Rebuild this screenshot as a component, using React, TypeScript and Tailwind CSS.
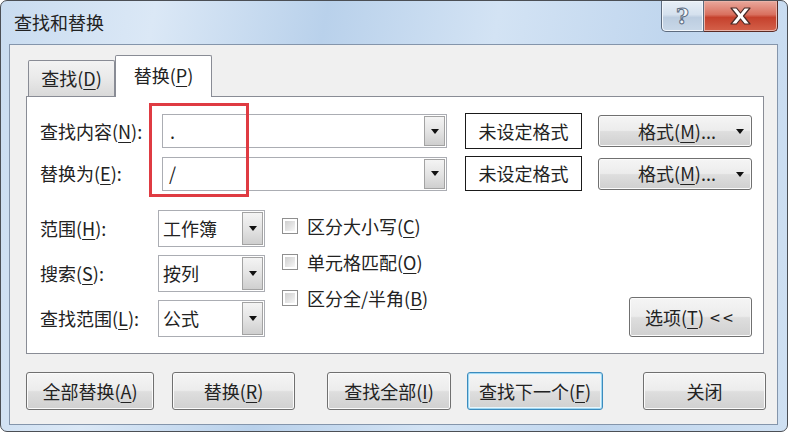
import React from "react";

const F = "font-['Microsoft_YaHei','Noto_Sans_CJK_SC','Noto_Sans',sans-serif]";

function U({ c }: { c: string }) {
  return <span className="underline underline-offset-[3px] decoration-1">{c}</span>;
}

function Arrow() {
  return (
    <svg width="8" height="5" viewBox="0 0 8 5">
      <path d="M0 0h8L4 5z" fill="#111" />
    </svg>
  );
}

function DropBtn() {
  return (
    <div className="m-[1px] w-[21px] self-stretch border border-[#a3a3a3] bg-[linear-gradient(180deg,#f4f4f4_0%,#e4e4e4_50%,#cfcfcf_100%)] flex items-center justify-center">
      <Arrow />
    </div>
  );
}

function Btn({
  children,
  className = "",
  focused = false,
}: {
  children: React.ReactNode;
  className?: string;
  focused?: boolean;
}) {
  return (
    <div
      className={`flex items-center justify-center rounded-[3px] border ${
        focused
          ? "border-[#3c8bbd] shadow-[inset_0_0_0_1px_#9fd7f2,inset_0_0_0_2px_#e9f6fc]"
          : "border-[#707070] shadow-[inset_0_0_0_1px_#fbfbfb]"
      } bg-[linear-gradient(180deg,#f5f5f5_0%,#ececec_48%,#dedede_52%,#d0d0d0_100%)] text-[18px] text-[#222] ${className}`}
    >
      {children}
    </div>
  );
}

function Check({ children }: { children: React.ReactNode }) {
  return (
    <div className="flex items-center h-[24px]">
      <div className="w-[16px] h-[16px] border border-[#8f8f8f] bg-white p-[2px]">
        <div className="w-full h-full bg-[linear-gradient(135deg,#cfcfcf_0%,#e6e6e6_60%,#f8f8f8_100%)]" />
      </div>
      <span className="ml-[9px] text-[18px] leading-none text-[#222]">{children}</span>
    </div>
  );
}

function Select({ value }: { value: string }) {
  return (
    <div className="w-[107px] h-[37px] border border-[#abadb3] bg-white flex">
      <div className="flex-1 flex items-center pl-[4px] text-[18px] text-[#222]">{value}</div>
      <DropBtn />
    </div>
  );
}

export default function App() {
  return (
    <div className={`w-[794px] h-[439px] bg-white overflow-hidden ${F}`}>
      <div className="w-[788px] h-[432px] rounded-[7px] border border-[#4b4f55] bg-[linear-gradient(100deg,#c9dcf0_0%,#dbe8f6_18%,#b9d1eb_38%,#d3e3f4_58%,#c0d6ee_78%,#cfe0f2_100%)] flex flex-col">
        {/* title bar */}
        <div className="h-[43px] flex items-start relative">
          <div className="pl-[13px] pt-[9px] text-[18px] text-[#222] leading-[24px]">查找和替换</div>
          <div className="ml-auto mr-[9px] flex">
            <div className="w-[43px] h-[31px] rounded-bl-[5px] border border-t-0 border-[#5d6b7e] bg-[linear-gradient(180deg,#e8eff7_0%,#d5e1ee_45%,#bccde0_55%,#c9d8e8_100%)] shadow-[inset_0_0_0_1px_#f1f6fb] flex items-center justify-center">
              <span className="text-[22px] font-bold leading-none text-[#f4f7fb] [-webkit-text-stroke:1px_#5d6d82] font-['DejaVu_Serif',serif]">?</span>
            </div>
            <div className="w-[74px] h-[31px] rounded-br-[5px] border border-t-0 border-l-0 border-[#5a2a24] bg-[linear-gradient(180deg,#e9a89c_0%,#d9705f_45%,#c5412d_55%,#d4614a_100%)] shadow-[inset_0_0_0_1px_#eab3a8] flex items-center justify-center">
              <svg width="21" height="18" viewBox="0 0 21 18">
                <path
                  d="M1 1h5.5l4 5L14.5 1H20l-6.5 8L20 17h-5.5l-4-5-4 5H1l6.5-8z"
                  fill="#ffffff"
                  stroke="#4a2a26"
                  strokeWidth="1.2"
                  strokeLinejoin="round"
                />
              </svg>
            </div>
          </div>
        </div>

        {/* client area */}
        <div className="ml-[8px] mr-[9px] h-[381px] border border-[#8495ab] bg-[#f0f0f0] pl-[16px] pt-[10px] flex flex-col">
          {/* tabs */}
          <div className="h-[41px] flex items-end">
            <div className="ml-[2px] w-[87px] h-[36px] border border-b-0 border-[#898c95] rounded-t-[2px] bg-[linear-gradient(180deg,#f3f3f3_0%,#e9e9e9_50%,#d9d9d9_100%)] flex items-center justify-center text-[18px] text-[#222]">
              查找(<U c="D" />)
            </div>
            <div className="w-[97px] h-[42px] -mb-[1px] relative z-10 border border-b-0 border-[#898c95] rounded-t-[2px] bg-white flex items-center justify-center text-[18px] text-[#222] pb-[2px]">
              替换(<U c="P" />)
            </div>
          </div>

          {/* panel */}
          <div className="w-[738px] h-[258px] border border-[#898c95] bg-white relative pl-[13px] pr-[11px] pt-[16px] flex flex-col text-[#222]">
            {/* row 1 */}
            <div className="flex items-center h-[36px]">
              <div className="w-[122px] text-[18px]">
                查找内容(<U c="N" />):
              </div>
              <div className="w-[285px] h-[34px] border border-[#abadb3] bg-white flex">
                <div className="flex-1 flex items-center pl-[7px] text-[18px]">.</div>
                <DropBtn />
              </div>
              <div className="ml-[18px] w-[117px] h-[36px] border border-[#1a1a1a] bg-white flex items-center justify-center text-[18px]">
                未设定格式
              </div>
              <Btn className="ml-[16px] w-[154px] h-[32px] relative">
                <span className="pl-[4px]">
                  格式(<U c="M" />)...
                </span>
                <span className="absolute right-[7px] top-[13px]">
                  <Arrow />
                </span>
              </Btn>
            </div>
            {/* row 2 */}
            <div className="flex items-center h-[35px] mt-[7px]">
              <div className="w-[122px] text-[18px]">
                替换为(<U c="E" />):
              </div>
              <div className="w-[285px] h-[34px] border border-[#abadb3] bg-white flex">
                <div className="flex-1 flex items-center pl-[6px] text-[18px]">/</div>
                <DropBtn />
              </div>
              <div className="ml-[18px] w-[117px] h-[35px] border border-[#1a1a1a] bg-white flex items-center justify-center text-[18px]">
                未设定格式
              </div>
              <Btn className="ml-[16px] w-[154px] h-[32px] relative">
                <span className="pl-[4px]">
                  格式(<U c="M" />)...
                </span>
                <span className="absolute right-[7px] top-[13px]">
                  <Arrow />
                </span>
              </Btn>
            </div>

            {/* lower section */}
            <div className="flex mt-[19px]">
              <div className="flex flex-col gap-[8px]">
                <div className="flex items-center">
                  <div className="w-[118px] text-[18px]">
                    范围(<U c="H" />):
                  </div>
                  <Select value="工作簿" />
                </div>
                <div className="flex items-center">
                  <div className="w-[118px] text-[18px]">
                    搜索(<U c="S" />):
                  </div>
                  <Select value="按列" />
                </div>
                <div className="flex items-center">
                  <div className="w-[118px] text-[18px]">
                    查找范围(<U c="L" />):
                  </div>
                  <Select value="公式" />
                </div>
              </div>
              <div className="ml-[17px] mt-[4px] flex flex-col gap-[12px]">
                <Check>
                  区分大小写(<U c="C" />)
                </Check>
                <Check>
                  单元格匹配(<U c="O" />)
                </Check>
                <Check>
                  区分全/半角(<U c="B" />)
                </Check>
              </div>
              <Btn className="ml-auto self-end w-[123px] h-[40px]">
                选项(<U c="T" />)<span className="ml-[6px] tracking-[3px]">&lt;&lt;</span>
              </Btn>
            </div>

            {/* red highlight */}
            <div className="absolute left-[122px] top-[6px] w-[100px] h-[94px] border-[3px] border-[#df3b42]" />
          </div>

          {/* bottom buttons */}
          <div className="flex mt-[18px]">
            <Btn className="w-[128px] h-[38px]">
              全部替换(<U c="A" />)
            </Btn>
            <Btn className="ml-[18px] w-[123px] h-[38px]">
              替换(<U c="R" />)
            </Btn>
            <Btn className="ml-[32px] w-[124px] h-[38px]">
              查找全部(<U c="I" />)
            </Btn>
            <Btn focused className="ml-[16px] w-[136px] h-[38px]">
              查找下一个(<U c="F" />)
            </Btn>
            <Btn className="ml-[40px] w-[123px] h-[38px]">关闭</Btn>
          </div>
        </div>
      </div>
    </div>
  );
}
